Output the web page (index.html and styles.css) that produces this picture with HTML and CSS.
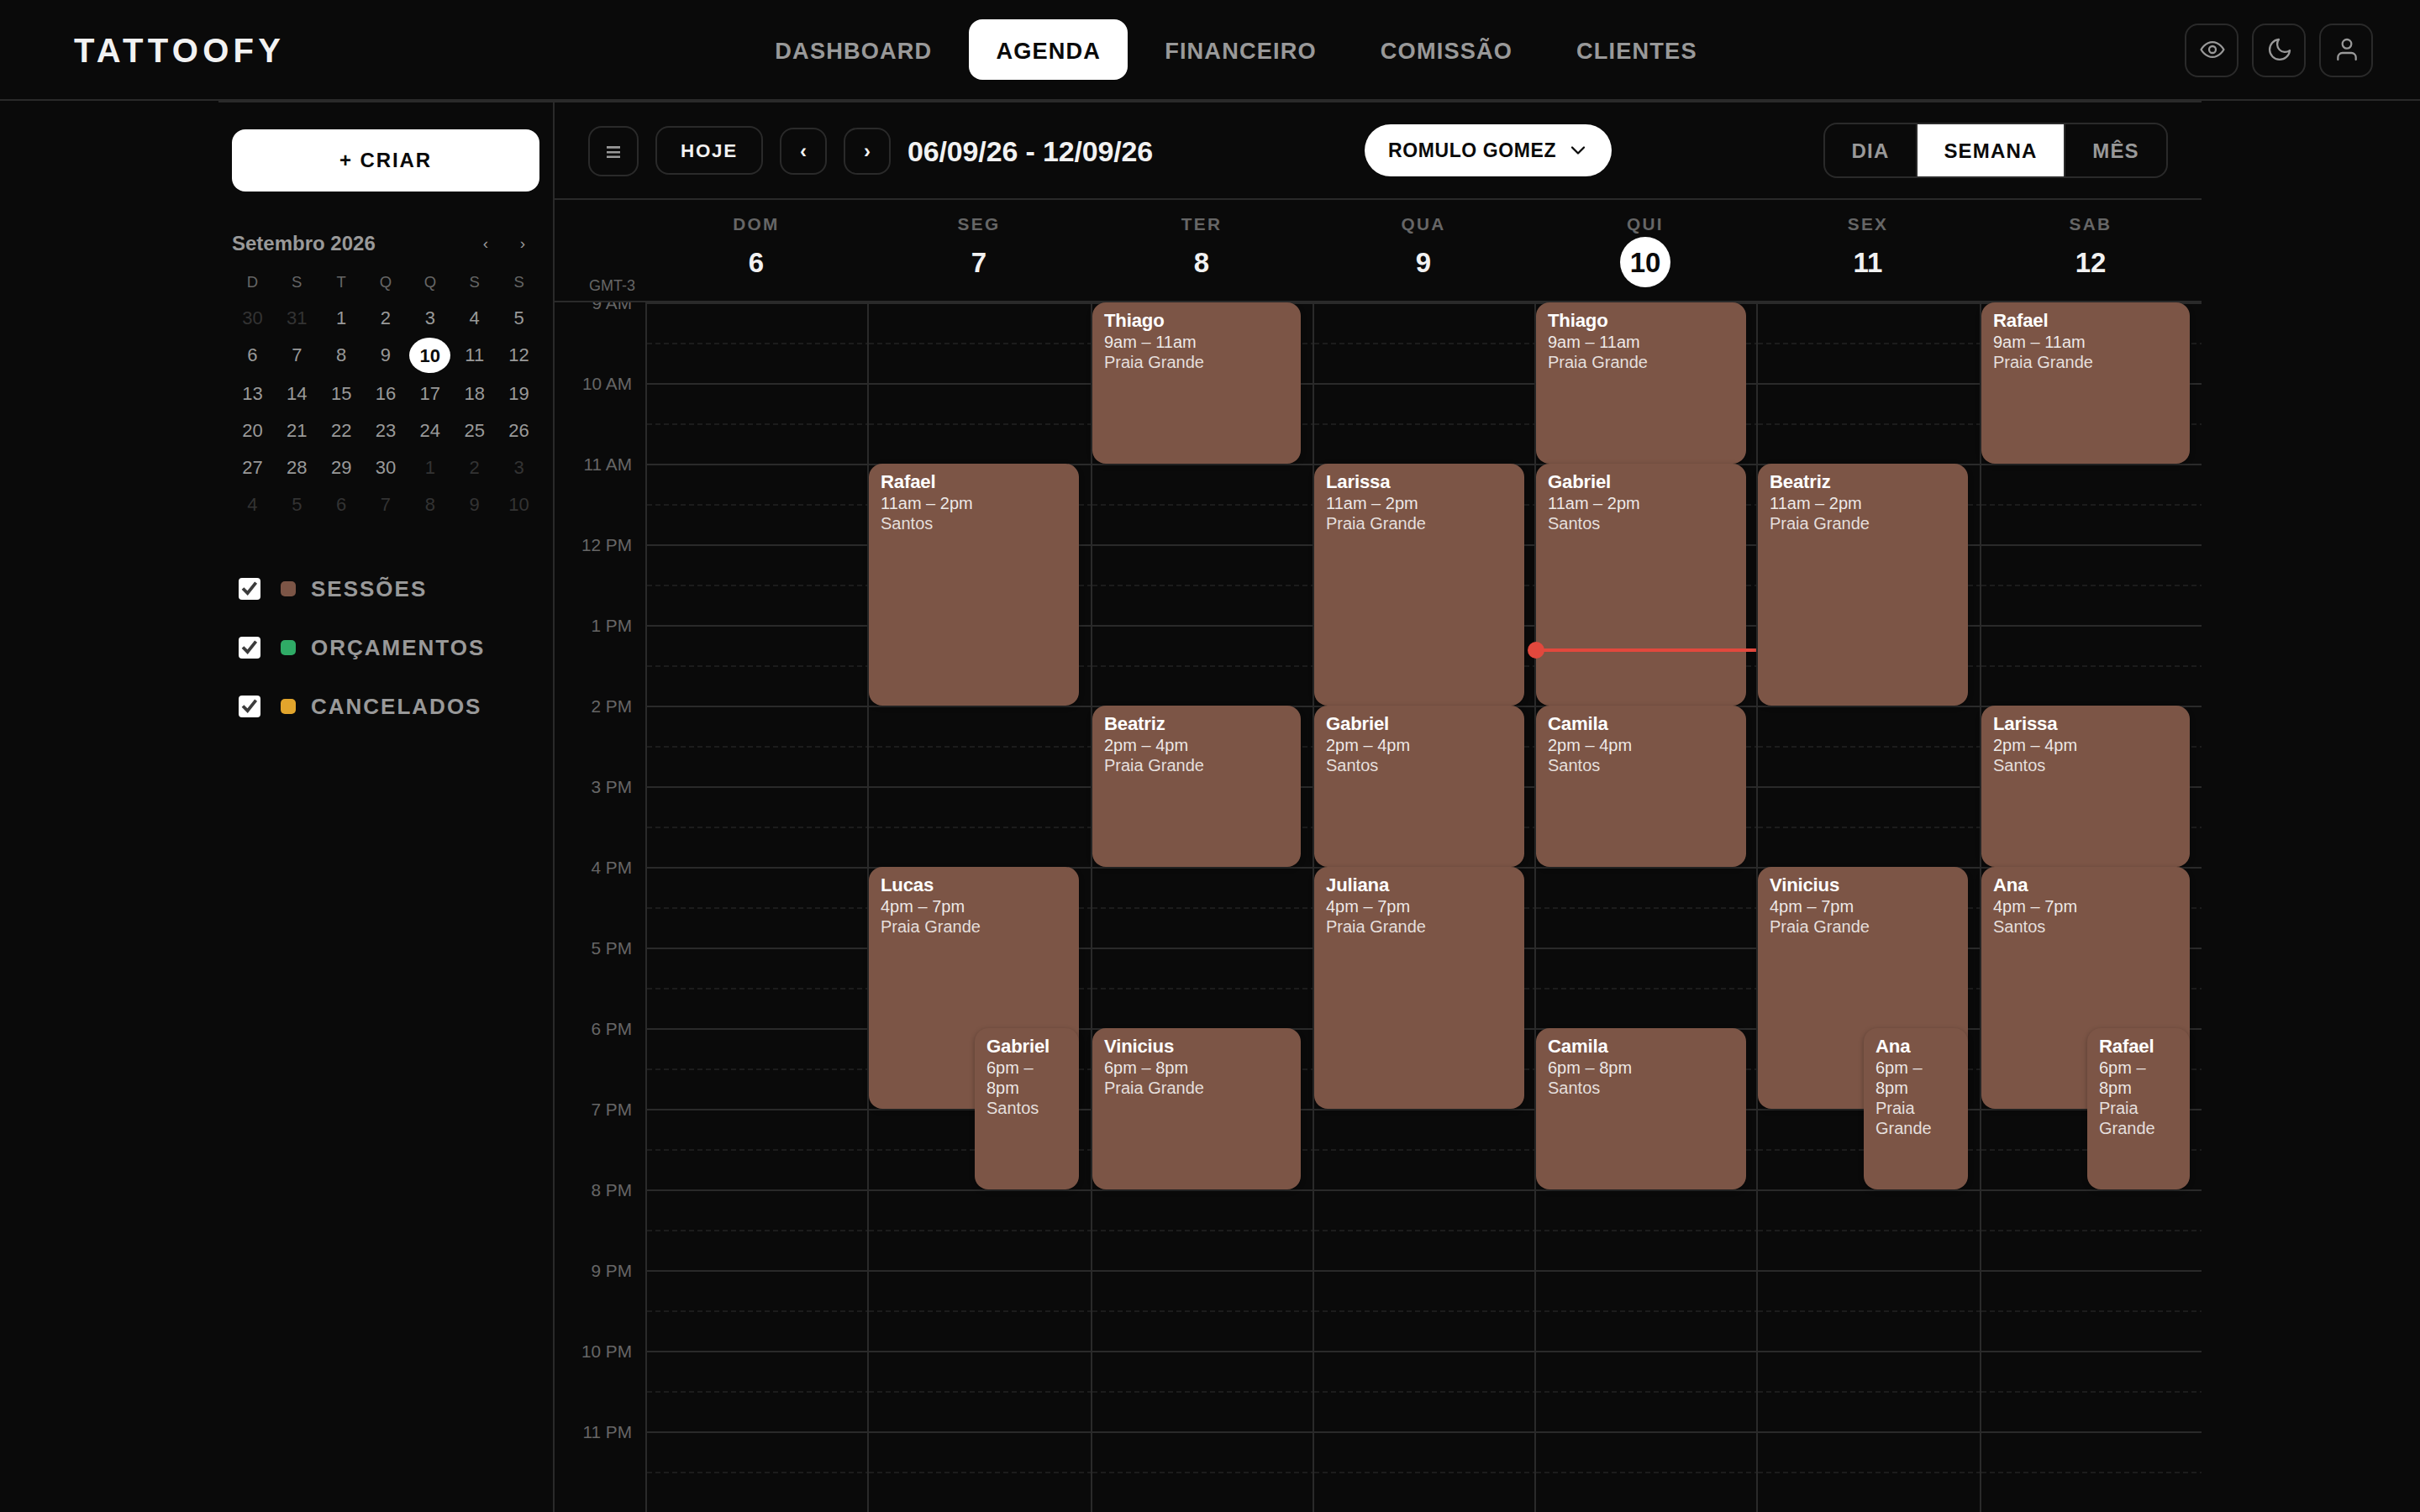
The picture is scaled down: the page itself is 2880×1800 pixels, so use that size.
FILE: index.html
```html
<!DOCTYPE html>
<html lang="pt-BR">
<head>
<meta charset="utf-8">
<title>Tattoofy – Agenda</title>
<link rel="stylesheet" href="styles.css">
</head>
<body>
<header class="topbar">
  <div class="logo">TATTOOFY</div>
  <nav class="nav">
    <a class="nav-item">DASHBOARD</a>
    <a class="nav-item active">AGENDA</a>
    <a class="nav-item">FINANCEIRO</a>
    <a class="nav-item">COMISSÃO</a>
    <a class="nav-item">CLIENTES</a>
  </nav>
  <div class="tools">
    <button class="icon-btn"><svg viewBox="0 0 24 24"><path d="M1.9 12s3.6-6.7 10.1-6.7S22.1 12 22.1 12s-3.6 6.7-10.1 6.7S1.9 12 1.9 12z"/><circle cx="12" cy="12" r="3"/></svg></button>
    <button class="icon-btn"><svg viewBox="0 0 24 24"><path d="M21 12.8A9 9 0 1 1 11.2 3a7 7 0 0 0 9.8 9.8z"/></svg></button>
    <button class="icon-btn"><svg viewBox="0 0 24 24"><circle cx="12" cy="7" r="4"/><path d="M20 21v-2a4 4 0 0 0-4-4H8a4 4 0 0 0-4 4v2"/></svg></button>
  </div>
</header>

<div class="agenda">
  <aside class="sidebar">
    <button class="create">+ CRIAR</button>
    <div class="mini-head"><span class="mini-title">Setembro 2026</span><span class="mini-arrow">‹</span><span class="mini-arrow">›</span></div>
    <div class="mini-week"><span>D</span><span>S</span><span>T</span><span>Q</span><span>Q</span><span>S</span><span>S</span></div>
    <div class="mini-days">
      <span class="out">30</span><span class="out">31</span><span>1</span><span>2</span><span>3</span><span>4</span><span>5</span>
      <span>6</span><span>7</span><span>8</span><span>9</span><span class="today">10</span><span>11</span><span>12</span>
      <span>13</span><span>14</span><span>15</span><span>16</span><span>17</span><span>18</span><span>19</span>
      <span>20</span><span>21</span><span>22</span><span>23</span><span>24</span><span>25</span><span>26</span>
      <span>27</span><span>28</span><span>29</span><span>30</span><span class="out">1</span><span class="out">2</span><span class="out">3</span>
      <span class="out">4</span><span class="out">5</span><span class="out">6</span><span class="out">7</span><span class="out">8</span><span class="out">9</span><span class="out">10</span>
    </div>
    <div class="filters">
      <label class="filter"><svg class="check" viewBox="0 0 26 26"><path d="M5 12.5l5.6 5.7L20.6 5.6"/></svg><i class="swatch sessions"></i>SESSÕES</label>
      <label class="filter"><svg class="check" viewBox="0 0 26 26"><path d="M5 12.5l5.6 5.7L20.6 5.6"/></svg><i class="swatch quotes"></i>ORÇAMENTOS</label>
      <label class="filter"><svg class="check" viewBox="0 0 26 26"><path d="M5 12.5l5.6 5.7L20.6 5.6"/></svg><i class="swatch canceled"></i>CANCELADOS</label>
    </div>
  </aside>

  <main class="main">
    <div class="toolbar">
      <div class="controls">
        <button class="ctl menu"><svg viewBox="0 0 16 14"><path d="M0 1.4h16M0 7.2h16M0 12.8h16"/></svg></button>
        <button class="ctl now-btn">HOJE</button>
        <button class="ctl step">‹</button>
        <button class="ctl step">›</button>
        <span class="range">06/09/26 - 12/09/26</span>
      </div>
      <button class="artist">ROMULO GOMEZ<svg viewBox="0 0 24 24"><path d="M6 9l6 6 6-6"/></svg></button>
      <div class="views"><span>DIA</span><span class="on">SEMANA</span><span>MÊS</span></div>
    </div>

    <div class="week-head">
      <div class="tz">GMT-3</div>
      <div class="day"><small>DOM</small><b>6</b></div>
      <div class="day"><small>SEG</small><b>7</b></div>
      <div class="day"><small>TER</small><b>8</b></div>
      <div class="day"><small>QUA</small><b>9</b></div>
      <div class="day current"><small>QUI</small><b>10</b></div>
      <div class="day"><small>SEX</small><b>11</b></div>
      <div class="day"><small>SAB</small><b>12</b></div>
    </div>

    <div class="week">
      <div class="hours">
        <span>9 AM</span><span>10 AM</span><span>11 AM</span><span>12 PM</span><span>1 PM</span><span>2 PM</span><span>3 PM</span><span>4 PM</span><span>5 PM</span><span>6 PM</span><span>7 PM</span><span>8 PM</span><span>9 PM</span><span>10 PM</span><span>11 PM</span>
      </div>
      <div class="col"></div>
      <div class="col">
        <div class="event" style="grid-row:3/6"><b>Rafael</b><p>11am – 2pm</p><p class="place">Santos</p></div>
        <div class="event" style="grid-row:8/11"><b>Lucas</b><p>4pm – 7pm</p><p class="place">Praia Grande</p></div>
        <div class="event half" style="grid-row:10/12"><b>Gabriel</b><p>6pm – 8pm</p><p class="place">Santos</p></div>
      </div>
      <div class="col">
        <div class="event" style="grid-row:1/3"><b>Thiago</b><p>9am – 11am</p><p class="place">Praia Grande</p></div>
        <div class="event" style="grid-row:6/8"><b>Beatriz</b><p>2pm – 4pm</p><p class="place">Praia Grande</p></div>
        <div class="event" style="grid-row:10/12"><b>Vinicius</b><p>6pm – 8pm</p><p class="place">Praia Grande</p></div>
      </div>
      <div class="col">
        <div class="event" style="grid-row:3/6"><b>Larissa</b><p>11am – 2pm</p><p class="place">Praia Grande</p></div>
        <div class="event" style="grid-row:6/8"><b>Gabriel</b><p>2pm – 4pm</p><p class="place">Santos</p></div>
        <div class="event" style="grid-row:8/11"><b>Juliana</b><p>4pm – 7pm</p><p class="place">Praia Grande</p></div>
      </div>
      <div class="col">
        <div class="event" style="grid-row:1/3"><b>Thiago</b><p>9am – 11am</p><p class="place">Praia Grande</p></div>
        <div class="event" style="grid-row:3/6"><b>Gabriel</b><p>11am – 2pm</p><p class="place">Santos</p></div>
        <div class="event" style="grid-row:6/8"><b>Camila</b><p>2pm – 4pm</p><p class="place">Santos</p></div>
        <div class="event" style="grid-row:10/12"><b>Camila</b><p>6pm – 8pm</p><p class="place">Santos</p></div>
        <div class="now-line" style="top:412px"></div>
      </div>
      <div class="col">
        <div class="event" style="grid-row:3/6"><b>Beatriz</b><p>11am – 2pm</p><p class="place">Praia Grande</p></div>
        <div class="event" style="grid-row:8/11"><b>Vinicius</b><p>4pm – 7pm</p><p class="place">Praia Grande</p></div>
        <div class="event half" style="grid-row:10/12"><b>Ana</b><p>6pm – 8pm</p><p class="place">Praia Grande</p></div>
      </div>
      <div class="col">
        <div class="event" style="grid-row:1/3"><b>Rafael</b><p>9am – 11am</p><p class="place">Praia Grande</p></div>
        <div class="event" style="grid-row:6/8"><b>Larissa</b><p>2pm – 4pm</p><p class="place">Santos</p></div>
        <div class="event" style="grid-row:8/11"><b>Ana</b><p>4pm – 7pm</p><p class="place">Santos</p></div>
        <div class="event half" style="grid-row:10/12"><b>Rafael</b><p>6pm – 8pm</p><p class="place">Praia Grande</p></div>
      </div>
    </div>
  </main>
</div>
</body>
</html>
```

FILE: styles.css
```css
:root {
  --bg: #0a0a0a;
  --line: #2a2a2a;
  --text: #f2f2f2;
  --muted: #999;
  --dim: #666;
  --event: #7c5546;
}

* { box-sizing: border-box; }

body {
  margin: 0;
  height: 1800px;
  overflow: hidden;
  background: var(--bg);
  color: var(--text);
  font-family: "Liberation Sans", Arial, Helvetica, sans-serif;
}

button {
  font: inherit;
  color: inherit;
  background: none;
  border: 0;
  padding: 0;
}

svg {
  fill: none;
  stroke: currentColor;
  stroke-linecap: round;
  stroke-linejoin: round;
}

/* Top bar */
.topbar {
  display: flex;
  align-items: center;
  justify-content: space-between;
  height: 120px;
  padding: 0 56px 0 88px;
  border-bottom: 2px solid var(--line);
}

.logo {
  width: 254px;
  font-size: 40px;
  font-weight: 700;
  letter-spacing: 5.3px;
  line-height: 44px;
  padding-top: 2px;
  white-space: nowrap;
}

.nav { display: flex; gap: 12px; }

.nav-item {
  height: 72px;
  padding: 2px 32px 0;
  border-radius: 16px;
  color: var(--muted);
  font-size: 27.2px;
  font-weight: 700;
  letter-spacing: 1.15px;
  line-height: 71px;
}

.nav-item.active { background: #fff; color: var(--bg); }

.tools { display: flex; gap: 16px; }

.icon-btn {
  display: flex;
  align-items: center;
  justify-content: center;
  width: 64px;
  height: 64px;
  border: 2px solid var(--line);
  border-radius: 16px;
  color: var(--muted);
  margin-top: 2px;
}

.icon-btn svg {
  width: 32px;
  height: 32px;
  margin: 0 0 2px 2px;
  stroke-width: 1.7;
}

/* Layout */
.agenda {
  display: flex;
  width: 2360px;
  height: 1680px;
  margin: 0 auto;
  border-top: 2px solid var(--line);
}

.sidebar {
  width: 400px;
  padding: 32px 16px 0;
  border-right: 2px solid var(--line);
}

.main { width: 1960px; display: flex; flex-direction: column; }

/* Sidebar */
.create {
  display: block;
  width: 366px;
  height: 74px;
  border-radius: 16px;
  background: #fff;
  color: var(--bg);
  font-size: 24px;
  font-weight: 700;
  letter-spacing: .08em;
}

.mini-head {
  display: flex;
  align-items: center;
  gap: 8px;
  height: 36px;
  margin-top: 44px;
  padding-right: 2px;
  color: var(--muted);
}

.mini-title { flex: 1; font-size: 24px; font-weight: 700; }
.mini-arrow { width: 36px; text-align: center; font-size: 19px; }

.mini-week,
.mini-days {
  display: grid;
  grid-template-columns: repeat(7, 1fr);
  column-gap: 4px;
  width: 366px;
  text-align: center;
}

.mini-week {
  margin-top: 14px;
  color: var(--dim);
  font-size: 18.5px;
  line-height: 28px;
}

.mini-days {
  row-gap: 4px;
  margin-top: 8px;
  color: var(--muted);
  font-size: 22px;
  line-height: 42px;
}

.mini-days span { height: 40px; }
.mini-days .out { color: #333; }

.mini-days .today {
  height: 42px;
  border-radius: 50%;
  background: #fff;
  color: var(--bg);
  font-weight: 700;
  line-height: 44px;
}

.filters { display: grid; gap: 44px; margin: 68px 0 0 8px; }

.filter {
  display: flex;
  align-items: center;
  height: 26px;
  color: var(--muted);
  font-size: 26px;
  font-weight: 700;
  letter-spacing: 2px;
  line-height: 28px;
}

.check {
  width: 26px;
  height: 26px;
  border-radius: 4px;
  background: #fff;
  color: #3b3b3b;
  stroke-width: 3.8;
  stroke-linecap: butt;
  stroke-linejoin: miter;
}

.swatch {
  width: 18px;
  height: 18px;
  margin: 0 18px 0 24px;
  border-radius: 5px;
}

.sessions { background: var(--event); }
.quotes { background: #2fab66; }
.canceled { background: #e2a52c; }

/* Toolbar */
.toolbar {
  display: flex;
  align-items: center;
  justify-content: space-between;
  height: 116px;
  padding: 0 40px;
  border-bottom: 2px solid var(--line);
}

.controls { display: flex; align-items: center; gap: 20px; padding-top: 2px; }

.ctl {
  display: flex;
  align-items: center;
  justify-content: center;
  border: 2px solid var(--line);
  border-radius: 16px;
  font-weight: 700;
}

.menu { width: 60px; height: 60px; color: var(--muted); }
.menu svg { width: 16px; height: 14px; margin-top: 2px; stroke-width: 2.6; stroke-linecap: butt; }

.now-btn {
  width: 128px;
  height: 58px;
  margin-top: -2px;
  padding-top: 2px;
  font-size: 22.4px;
  letter-spacing: .08em;
}

.step { width: 56px; height: 56px; font-size: 24px; }

.range {
  width: 292px;
  font-size: 34px;
  font-weight: 700;
  letter-spacing: -.15px;
  white-space: nowrap;
}

.artist {
  display: flex;
  align-items: center;
  justify-content: space-between;
  width: 294px;
  height: 62px;
  padding: 0 26px 0 28px;
  border-radius: 31px;
  background: #fff;
  color: var(--bg);
  font-size: 23px;
  font-weight: 700;
  letter-spacing: .6px;
}

.artist svg { width: 28px; height: 28px; stroke-width: 2; }

.views {
  display: flex;
  height: 66px;
  overflow: hidden;
  border: 2px solid var(--line);
  border-radius: 16px;
  color: var(--muted);
  font-size: 24px;
  font-weight: 700;
  letter-spacing: .05em;
  line-height: 63px;
}

.views span { width: 108px; text-align: center; }
.views span + span { width: 120px; border-left: 2px solid var(--line); }
.views .on + span { width: 122px; }
.views span.on { width: 176px; background: #fff; color: var(--bg); }

/* Week grid */
.week-head,
.week {
  display: grid;
  grid-template-columns: 108px 264px 266px 264px 264px 264px 266px 264px;
}

.week-head { height: 122px; border-bottom: 2px solid var(--line); }

.tz {
  align-self: end;
  padding: 0 12px 7px 0;
  color: var(--dim);
  font-size: 18px;
  line-height: 22px;
  text-align: right;
}

.day {
  display: flex;
  flex-direction: column;
  align-items: center;
  padding-top: 16px;
}

.day small {
  height: 28px;
  color: var(--dim);
  font-size: 20.8px;
  font-weight: 700;
  letter-spacing: .11em;
  line-height: 26px;
}

.day b {
  width: 60px;
  height: 60px;
  border-radius: 50%;
  font-size: 33px;
  line-height: 62px;
  text-align: center;
}

.current b { background: #fff; color: var(--bg); }

.week { flex: 1; min-height: 0; overflow: hidden; }

.hours {
  display: grid;
  grid-auto-rows: 96px;
  padding-right: 16px;
  color: var(--dim);
  font-size: 20.8px;
  line-height: 24px;
  text-align: right;
}

.hours span { margin-top: -11px; }

/* Solid hour lines, with dashes showing only through the half-hour gap */
.col {
  position: relative;
  display: grid;
  grid-template-rows: repeat(15, 96px);
  grid-template-columns: 1fr;
  border-left: 2px solid var(--line);
  background:
    linear-gradient(var(--line) 2px, var(--bg) 2px 48px, transparent 48px 50px, var(--bg) 50px) 0 0 / 100% 96px,
    repeating-linear-gradient(90deg, #1c1c1c 0 6px, transparent 6px 10px);
}

.event {
  grid-column: 1;
  margin-right: 14px;
  padding: 8px 14px;
  border-radius: 16px;
  background: var(--event);
  box-shadow: 0 2px 6px rgba(0, 0, 0, .3);
  color: #fff;
  overflow: hidden;
}

.col:nth-child(5) .event,
.col:nth-child(6) .event { margin-right: 12px; }

.col .event.half { margin-left: 126px; }

.event b {
  display: block;
  margin-bottom: -1px;
  font-size: 22.2px;
  letter-spacing: -.2px;
  line-height: 28px;
}

.event p { margin: 0; font-size: 20px; line-height: 24px; color: rgba(255, 255, 255, .88); }
.event .place { color: rgba(255, 255, 255, .82); }

.now-line {
  position: absolute;
  left: 0;
  right: 0;
  height: 4px;
  background: #e2483d;
}

.now-line::before {
  content: "";
  position: absolute;
  left: -10px;
  top: -8px;
  width: 20px;
  height: 20px;
  border-radius: 50%;
  background: inherit;
}
```
